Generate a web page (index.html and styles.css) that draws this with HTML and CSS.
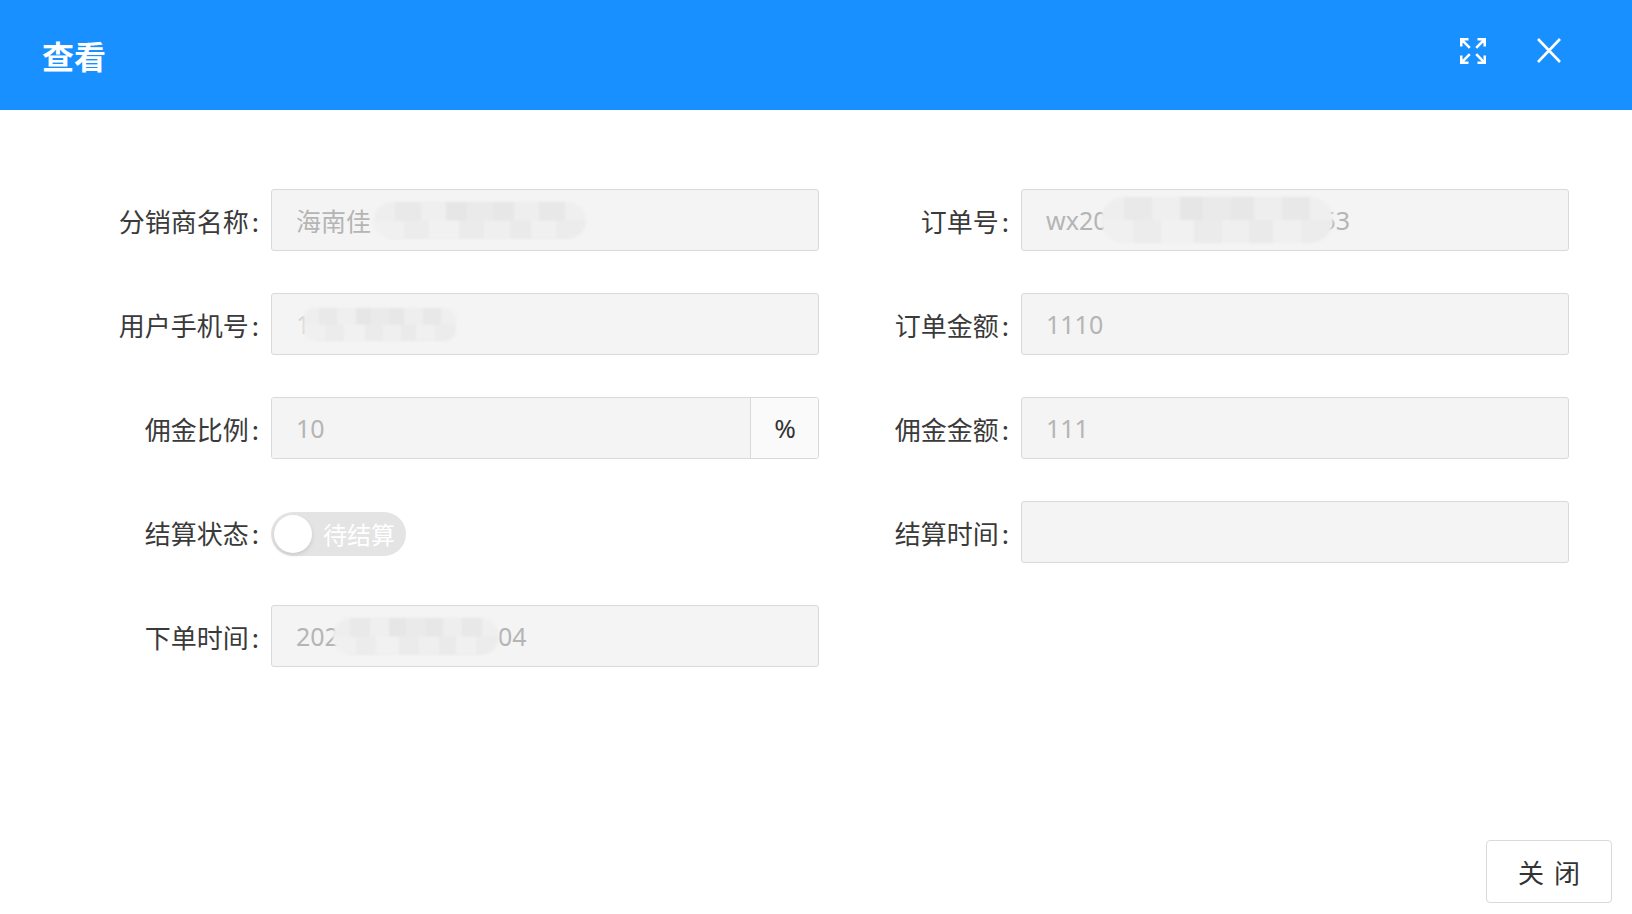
FILE: index.html
```html
<!DOCTYPE html>
<html lang="zh-CN">
<head>
<meta charset="utf-8">
<title>查看</title>
<link rel="stylesheet" href="styles.css">
</head>
<body>
<div class="dialog">
  <div class="header">
    <div class="title">查看</div>
    <div class="tools">
      <svg class="icon-expand" viewBox="0 0 26 26" width="26" height="26">
        <path d="M1.2 8.5V1.2H8.5M1.2 1.2L9.8 9.8M17.5 1.2H24.8V8.5M24.8 1.2L16.2 9.8M1.2 17.5V24.8H8.5M1.2 24.8L9.8 16.2M17.5 24.8H24.8V17.5M24.8 24.8L16.2 16.2" fill="none" stroke="#fff" stroke-width="2.6"/>
      </svg>
      <svg class="icon-close" viewBox="0 0 24 25" width="24" height="25">
        <path d="M1 1L23 24M23 1L1 24" fill="none" stroke="#fff" stroke-width="2.6"/>
      </svg>
    </div>
  </div>

  <div class="body">
    <div class="item">
      <div class="label">分销商名称<span class="colon">:</span></div>
      <div class="input"><span>海南佳</span><span class="mask mask-name"></span></div>
    </div>
    <div class="item">
      <div class="label">订单号<span class="colon">:</span></div>
      <div class="input"><span>wx20</span><span class="mask mask-order"></span><span class="under">53</span></div>
    </div>

    <div class="item">
      <div class="label">用户手机号<span class="colon">:</span></div>
      <div class="input"><span class="faint">1</span><span class="mask mask-phone"></span></div>
    </div>
    <div class="item">
      <div class="label">订单金额<span class="colon">:</span></div>
      <div class="input"><span>1110</span></div>
    </div>

    <div class="item">
      <div class="label">佣金比例<span class="colon">:</span></div>
      <div class="input-group">
        <div class="input grow"><span>10</span></div>
        <div class="addon">%</div>
      </div>
    </div>
    <div class="item">
      <div class="label">佣金金额<span class="colon">:</span></div>
      <div class="input"><span>111</span></div>
    </div>

    <div class="item">
      <div class="label">结算状态<span class="colon">:</span></div>
      <div class="switch">
        <span class="knob"></span>
        <span class="switch-text">待结算</span>
      </div>
    </div>
    <div class="item">
      <div class="label">结算时间<span class="colon">:</span></div>
      <div class="input"></div>
    </div>

    <div class="item">
      <div class="label">下单时间<span class="colon">:</span></div>
      <div class="input"><span>202</span><span class="mask mask-time"></span><span class="under">04</span></div>
    </div>
  </div>

  <div class="footer">
    <button class="btn">关闭</button>
  </div>
</div>
</body>
</html>
```

FILE: styles.css
```css
* {
  box-sizing: border-box;
}

html, body {
  margin: 0;
  padding: 0;
  background: #ffffff;
}

body {
  font-family: "Noto Sans", "Noto Sans CJK SC", sans-serif;
  color: #333333;
}

.dialog {
  width: 1632px;
  height: 914px;
  display: flex;
  flex-direction: column;
  overflow: hidden;
}

.header {
  height: 110px;
  flex: none;
  background: #1890ff;
  display: flex;
  align-items: center;
  justify-content: space-between;
  padding: 0 71px 0 42px;
}

.title {
  color: #ffffff;
  font-family: "Noto Sans CJK SC", sans-serif;
  font-size: 32px;
  font-weight: 700;
  line-height: 1;
  margin-top: 0;
}

.tools {
  display: flex;
  align-items: center;
  gap: 51px;
  margin-top: -9px;
}

.icon-expand,
.icon-close {
  display: block;
}

.body {
  flex: 1;
  display: grid;
  grid-template-columns: 750px 750px;
  grid-auto-rows: 62px;
  row-gap: 42px;
  align-content: start;
  padding: 79px 0 0 69px;
}

.item {
  display: flex;
  align-items: center;
}

.label {
  width: 202px;
  flex: none;
  text-align: right;
  padding-right: 12px;
  font-family: "Noto Sans CJK SC", sans-serif;
  font-size: 26px;
  color: #3a3a3a;
  white-space: nowrap;
}

.colon {
  margin-left: 3px;
}

.input {
  width: 548px;
  height: 62px;
  border: 1px solid #d9d9d9;
  border-radius: 3px;
  background: #f4f4f4;
  display: flex;
  align-items: center;
  padding: 0 24px;
  font-size: 25px;
  color: #b5b5b5;
  white-space: nowrap;
  overflow: hidden;
}

.input span {
  font-family: "Noto Sans", "Noto Sans CJK SC", sans-serif;
}

.input .faint {
  color: #d6d6d6;
}

.input .under {
  position: relative;
  z-index: 0;
}

.mask {
  display: inline-block;
  position: relative;
  z-index: 1;
  height: 37px;
  border-radius: 18px;
  filter: blur(1.2px);
  background-color: #ededed;
  background-image:
    linear-gradient(90deg,
      #eeeeee 0 10%, #e9e9e9 10% 22%, #efefef 22% 34%, #e6e6e6 34% 44%,
      #eaeaea 44% 56%, #e7e7e7 56% 66%, #eeeeee 66% 78%, #e8e8e8 78% 90%, #efefef 90% 100%),
    linear-gradient(90deg,
      #f0f0f0 0 14%, #ececec 14% 26%, #f1f1f1 26% 40%, #ebebeb 40% 52%,
      #efefef 52% 64%, #eaeaea 64% 74%, #f0f0f0 74% 86%, #ececec 86% 100%);
  background-size: 100% 50%, 100% 50%;
  background-position: 0 0, 0 100%;
  background-repeat: no-repeat;
}

.mask-name {
  width: 212px;
  margin-left: 3px;
}

.mask-order {
  width: 232px;
  height: 46px;
  margin-left: -6px;
  margin-right: -12px;
  border-radius: 23px;
}

.mask-phone {
  width: 152px;
  height: 33px;
  margin-left: -6px;
  border-radius: 10px;
}

.mask-time {
  width: 166px;
  margin-left: -6px;
  margin-right: -1px;
}

.input-group {
  width: 548px;
  height: 62px;
  display: flex;
  border: 1px solid #d9d9d9;
  border-radius: 3px;
  overflow: hidden;
}

.input-group .input.grow {
  flex: 1;
  width: auto;
  height: 60px;
  border: none;
  border-radius: 0;
}

.addon {
  width: 68px;
  flex: none;
  border-left: 1px solid #d9d9d9;
  background: #fafafa;
  color: #333333;
  font-size: 26px;
  display: flex;
  align-items: center;
  justify-content: center;
  padding-left: 1px;
}

.switch {
  width: 135px;
  height: 44px;
  margin-top: 4px;
  border-radius: 22px;
  background: #e4e4e4;
  display: flex;
  align-items: center;
  padding-left: 3px;
  gap: 11px;
}

.knob {
  width: 38px;
  height: 38px;
  border-radius: 50%;
  background: #ffffff;
  box-shadow: 0 2px 4px rgba(0, 0, 0, 0.12);
  flex: none;
}

.switch-text {
  font-family: "Noto Sans CJK SC", sans-serif;
  font-size: 24px;
  color: #ffffff;
  line-height: 1;
}

.footer {
  flex: none;
  display: flex;
  justify-content: flex-end;
  padding: 0 20px 11px 0;
}

.btn {
  width: 126px;
  height: 63px;
  border: 1px solid #d9d9d9;
  border-radius: 4px;
  background: #ffffff;
  color: #333333;
  font-family: "Noto Sans CJK SC", sans-serif;
  font-size: 26px;
  letter-spacing: 10px;
  padding: 0 0 0 10px;
  cursor: pointer;
}
```
